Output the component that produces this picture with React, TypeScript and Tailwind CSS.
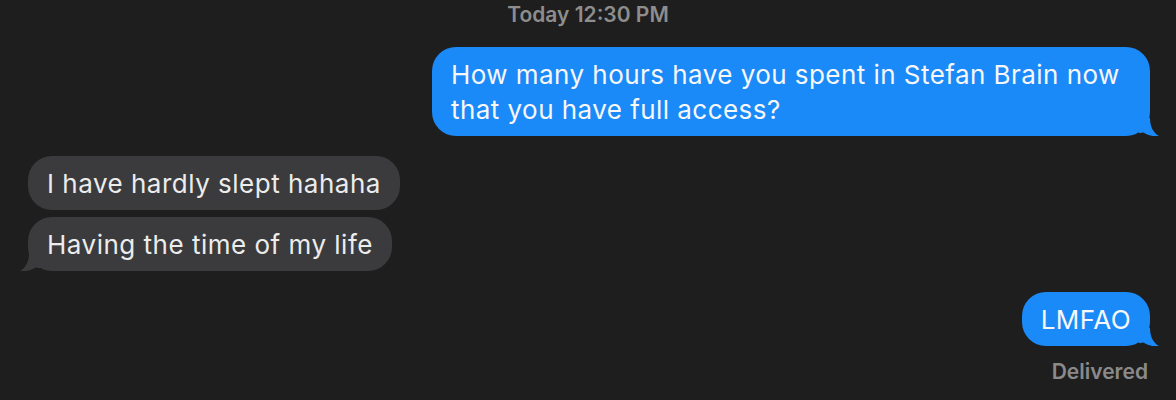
import React from 'react';

const font = { fontFamily: 'Inter, "Liberation Sans", Arial, sans-serif' };

const TailRight: React.FC<{ color: string }> = ({ color }) => (
  <svg
    className="absolute -right-[9px] bottom-0"
    width="20"
    height="18"
    viewBox="0 0 20 18"
  >
    <path d="M0 0 H11 C11 8 14 15 20 18 C15 18.8 9 17.5 4.5 14.6 L0 15.2 Z" fill={color} />
  </svg>
);

const TailLeft: React.FC<{ color: string }> = ({ color }) => (
  <svg
    className="absolute -left-[8px] bottom-0"
    width="20"
    height="18"
    viewBox="0 0 20 18"
  >
    <path d="M20 0 H9 C9 8 6 15 0 18 C5 18.8 11 17.5 15.5 14.6 L20 15.2 Z" fill={color} />
  </svg>
);

const Sent: React.FC<{ children: React.ReactNode; className?: string; tail?: boolean }> = ({ children, className = '', tail }) => (
  <div className={`relative bg-[#1b8af9] text-[#f7f7f7] rounded-[24px] px-[19px] py-[9.5px] text-[26px] leading-[35px] tracking-[0.45px] ${className}`}>
    {children}
    {tail && <TailRight color="#1b8af9" />}
  </div>
);

const Received: React.FC<{ children: React.ReactNode; tail?: boolean }> = ({ children, tail }) => (
  <div className="relative bg-[#3b3b3d] text-[#ececec] rounded-[24px] px-[19px] py-[9.5px] text-[26px] leading-[35px] tracking-[0.5px] self-start">
    {children}
    {tail && <TailLeft color="#3b3b3d" />}
  </div>
);

const App: React.FC = () => {
  return (
    <div className="w-[1176px] h-[400px] bg-[#1e1e1e] overflow-hidden flex flex-col" style={font}>
      <div className="pt-[3px] text-center text-[21px] leading-[24px] font-semibold text-[#8d8d8d]">
        Today 12:30 PM
      </div>

      <div className="flex justify-end pr-[26px] mt-[20px]">
        <Sent className="w-[718px]" tail>
          How many hours have you spent in Stefan Brain now that you have full access?
        </Sent>
      </div>

      <div className="flex flex-col gap-[7px] pl-[28px] mt-[20px]">
        <Received>I have hardly slept hahaha</Received>
        <Received tail>Having the time of my life</Received>
      </div>

      <div className="flex flex-col items-end pr-[26px] mt-[21px]">
        <Sent tail>LMFAO</Sent>
        <div className="mt-[14px] pr-[2px] text-[21px] leading-[24px] font-semibold text-[#8a8a8a]">
          Delivered
        </div>
      </div>
    </div>
  );
};

export default App;
